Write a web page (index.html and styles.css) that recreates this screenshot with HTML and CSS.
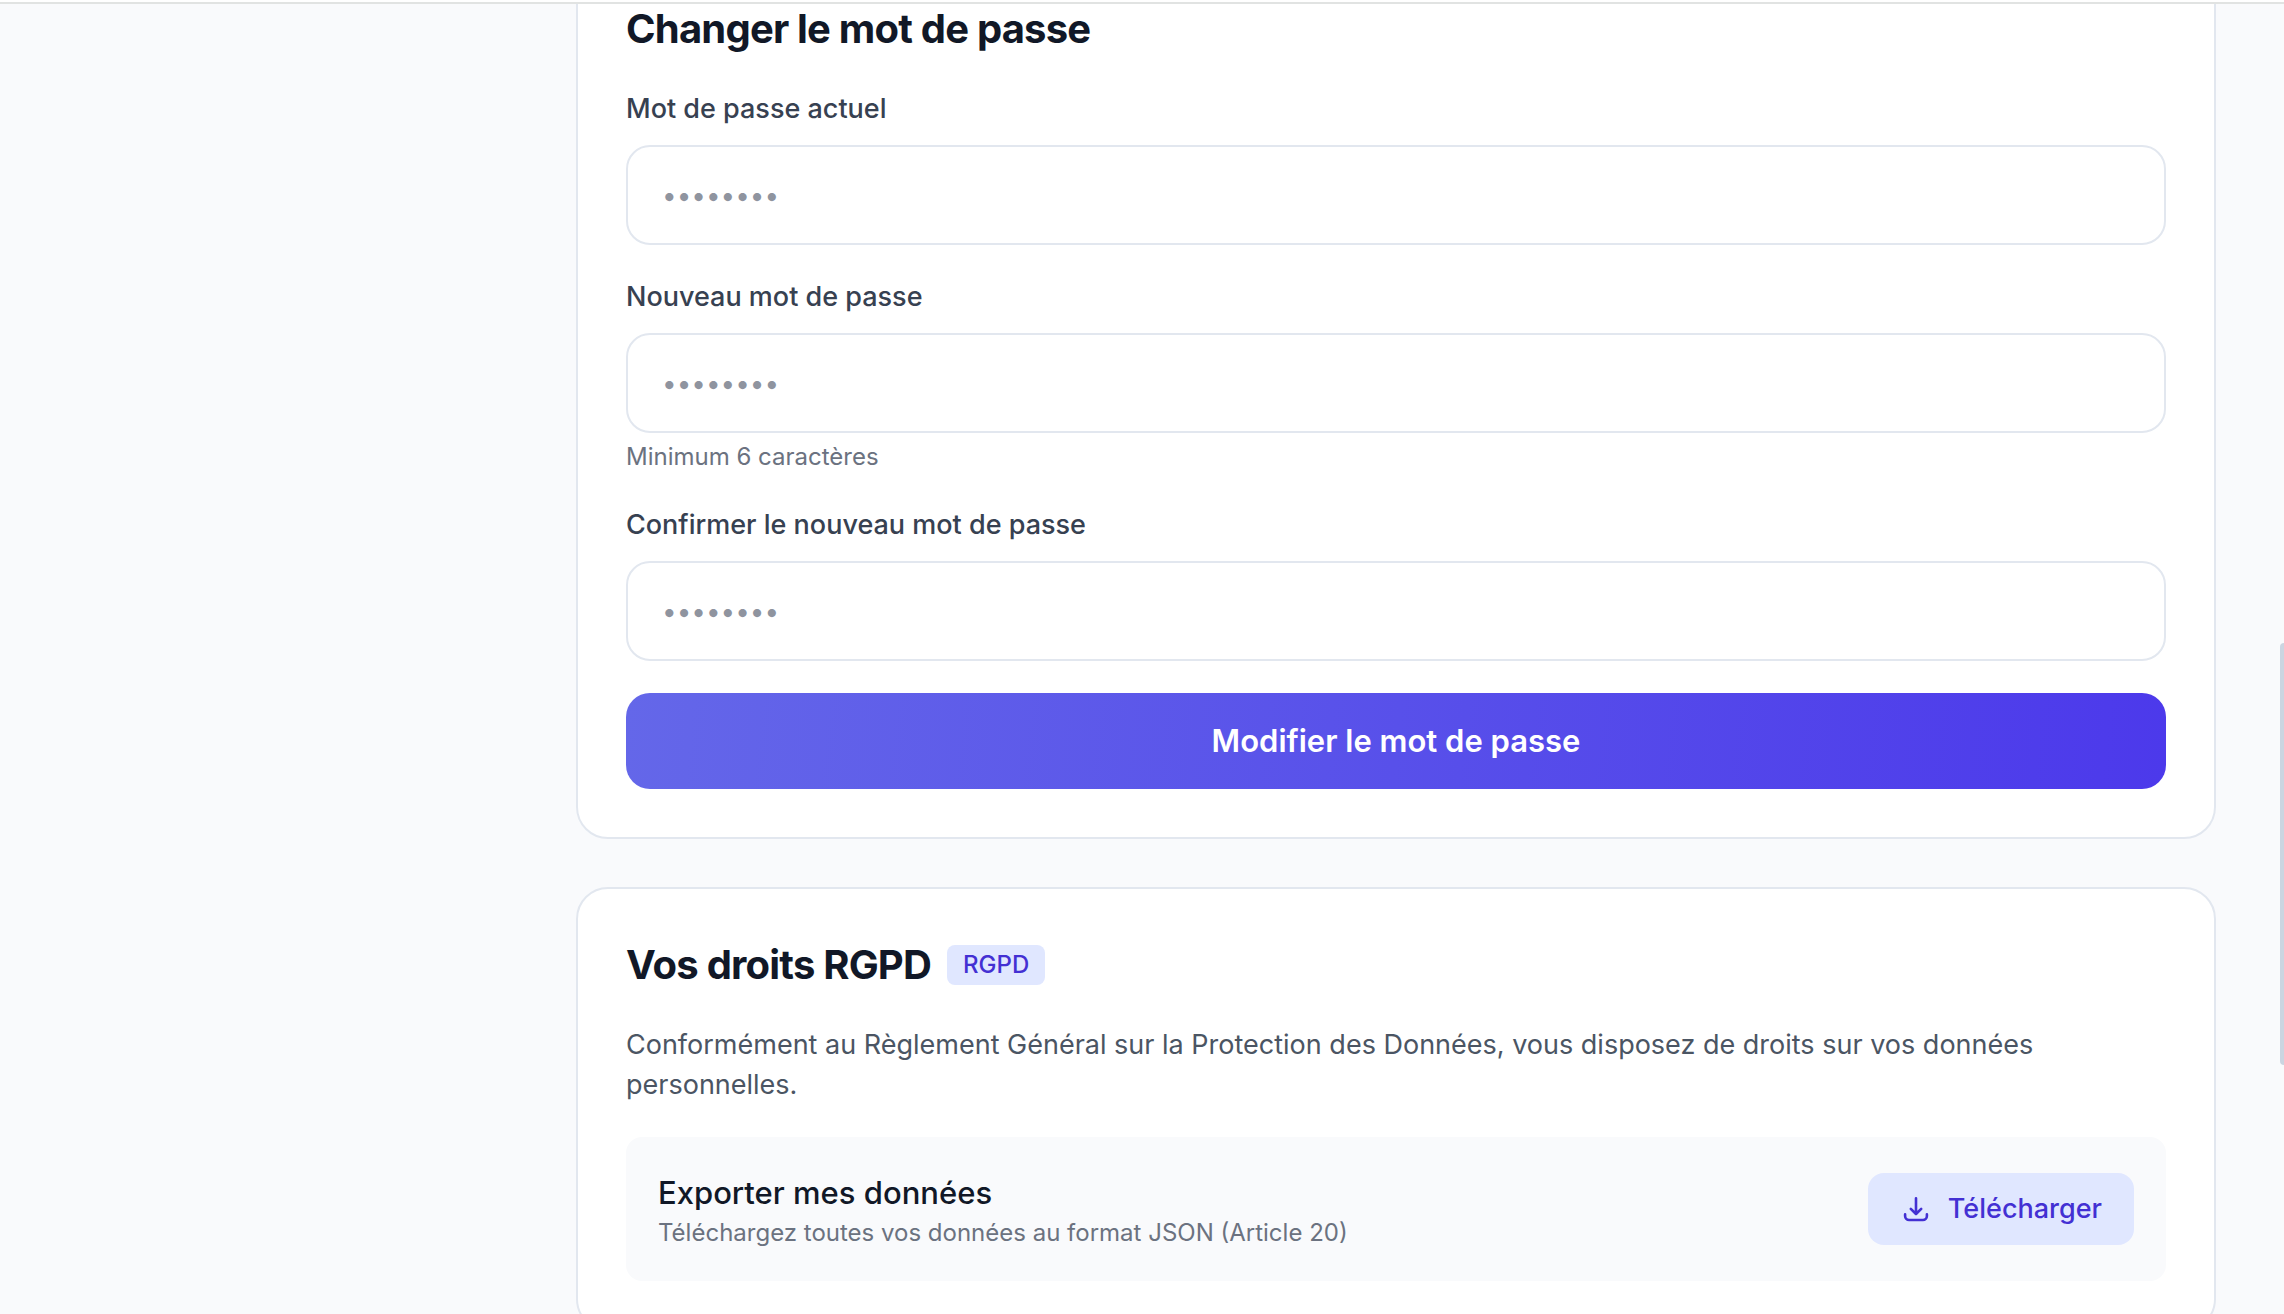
FILE: index.html
```html
<!DOCTYPE html>
<html lang="fr">
<head>
  <meta charset="UTF-8" />
  <meta name="viewport" content="width=device-width, initial-scale=1.0"/>
  <title>Paramètres du compte</title>
  <link rel="stylesheet" href="styles.css">
</head>
<body>

  <header class="topbar"></header>

  <div class="layout">
    <aside class="sidebar"></aside>

    <main class="content">

      <!-- Password -->
      <section class="card">
        <h2 class="card-title">Changer le mot de passe</h2>
        <form class="password-form">
          <div class="field">
            <label for="currentPassword">Mot de passe actuel</label>
            <input type="password" id="currentPassword" placeholder="••••••••" />
          </div>
          <div class="field">
            <label for="newPassword">Nouveau mot de passe</label>
            <input type="password" id="newPassword" placeholder="••••••••" />
            <p class="hint">Minimum 6 caractères</p>
          </div>
          <div class="field">
            <label for="confirmPassword">Confirmer le nouveau mot de passe</label>
            <input type="password" id="confirmPassword" placeholder="••••••••" />
          </div>
          <button type="button" class="btn-primary">Modifier le mot de passe</button>
        </form>
      </section>

      <!-- GDPR rights -->
      <section class="card">
        <h2 class="card-title">Vos droits RGPD <span class="badge">RGPD</span></h2>
        <p class="intro">Conformément au Règlement Général sur la Protection des Données, vous disposez de droits sur vos données personnelles.</p>
        <div class="right-row">
          <div class="right-text">
            <h3>Exporter mes données</h3>
            <p>Téléchargez toutes vos données au format JSON (Article 20)</p>
          </div>
          <button type="button" class="btn-soft">
            <svg class="icon" viewBox="0 0 32 32" aria-hidden="true">
              <path d="M16 5.2V21M10.8 15.8L16 21l5.2-5.2" />
              <path d="M5.1 21.4V23a4 4 0 0 0 4 4h13.8a4 4 0 0 0 4-4v-1.6" />
            </svg>
            Télécharger
          </button>
        </div>
      </section>

    </main>
  </div>

  <div class="scroll-thumb"></div>

</body>
</html>
```

FILE: styles.css
```css
/* Basic Reset */
* {
  margin: 0;
  padding: 0;
  box-sizing: border-box;
}

body {
  background: #f9fafc;
  color: #111827;
  font-family: Inter, "Liberation Sans", sans-serif;
  font-size: 27px;
  line-height: 40px;
  height: 100vh;
  overflow: hidden;
}

/* Bottom edge of the top bar, stays over the scrolled content */
.topbar {
  position: fixed;
  top: 0;
  left: 0;
  right: 0;
  height: 4px;
  background: #fff;
  border-bottom: 2px solid #e1e3e2;
  z-index: 10;
}

.layout {
  display: flex;
  margin-top: -49px;  /* content is scrolled under the top bar */
}

.sidebar {
  flex: 0 0 512px;
}

.content {
  flex: 1;
  display: flex;
  flex-direction: column;
  gap: 48px;
  padding: 0 68px 48px 64px;
}

/* Cards */
.card {
  background: #fff;
  border: 2px solid #e2e7ef;
  border-radius: 32px;
  padding: 48px;
}

.card-title {
  display: flex;
  align-items: center;
  gap: 16px;
  font-size: 40px;
  font-weight: 700;
  letter-spacing: -0.02em;
  line-height: 56px;
  margin-bottom: 32px;
}

.badge {
  background: #e0e7ff;
  color: #4330d3;
  border-radius: 8px;
  padding: 4px 16px;
  font-size: 24px;
  font-weight: 500;
  letter-spacing: normal;
  line-height: 32px;
}

/* Password form */
.password-form {
  display: flex;
  flex-direction: column;
  gap: 32px;
}

.field {
  display: flex;
  flex-direction: column;
}

.field label {
  color: #374151;
  font-weight: 500;
  margin-bottom: 16px;
}

.field input {
  width: 100%;
  height: 100px;
  background: #fff;
  border: 2px solid #e2e7ef;
  border-radius: 24px;
  padding: 24px 34px;
  font-family: inherit;
  font-size: 26px;
  color: #111827;
}

.field input::placeholder {
  color: #8f949f;
}

.hint {
  color: #6b7280;
  font-size: 24px;
  line-height: 32px;
  margin-top: 8px;
}

button {
  border: none;
  font-family: inherit;
  font-weight: 500;
  cursor: pointer;
}

.btn-primary {
  background: linear-gradient(96deg, #6467e9, #4c39eb);
  color: #fff;
  border-radius: 24px;
  padding: 24px;
  font-size: 31px;
  font-weight: 600;
  line-height: 48px;
}

/* GDPR rights */
.intro {
  color: #4b5563;
  margin-bottom: 32px;
}

.right-row {
  display: flex;
  align-items: center;
  justify-content: space-between;
  background: #f9fafc;
  border-radius: 16px;
  padding: 32px;
}

.right-text h3 {
  font-size: 31px;
  font-weight: 500;
  line-height: 48px;
}

.right-text p {
  color: #6b7280;
  font-size: 24px;
  line-height: 32px;
}

.btn-soft {
  display: flex;
  align-items: center;
  gap: 16px;
  background: #e0e7ff;
  color: #4330d3;
  border-radius: 16px;
  padding: 16px 32px;
  font-size: 27px;
  line-height: 40px;
}

.icon {
  width: 32px;
  height: 32px;
  fill: none;
  stroke: currentColor;
  stroke-width: 2.6;
  stroke-linecap: round;
  stroke-linejoin: round;
}

.scroll-thumb {
  position: fixed;
  top: 643px;
  right: 0;
  width: 4px;
  height: 422px;
  background: #cbd5e1;
  border-radius: 4px 0 0 4px;
}
```
